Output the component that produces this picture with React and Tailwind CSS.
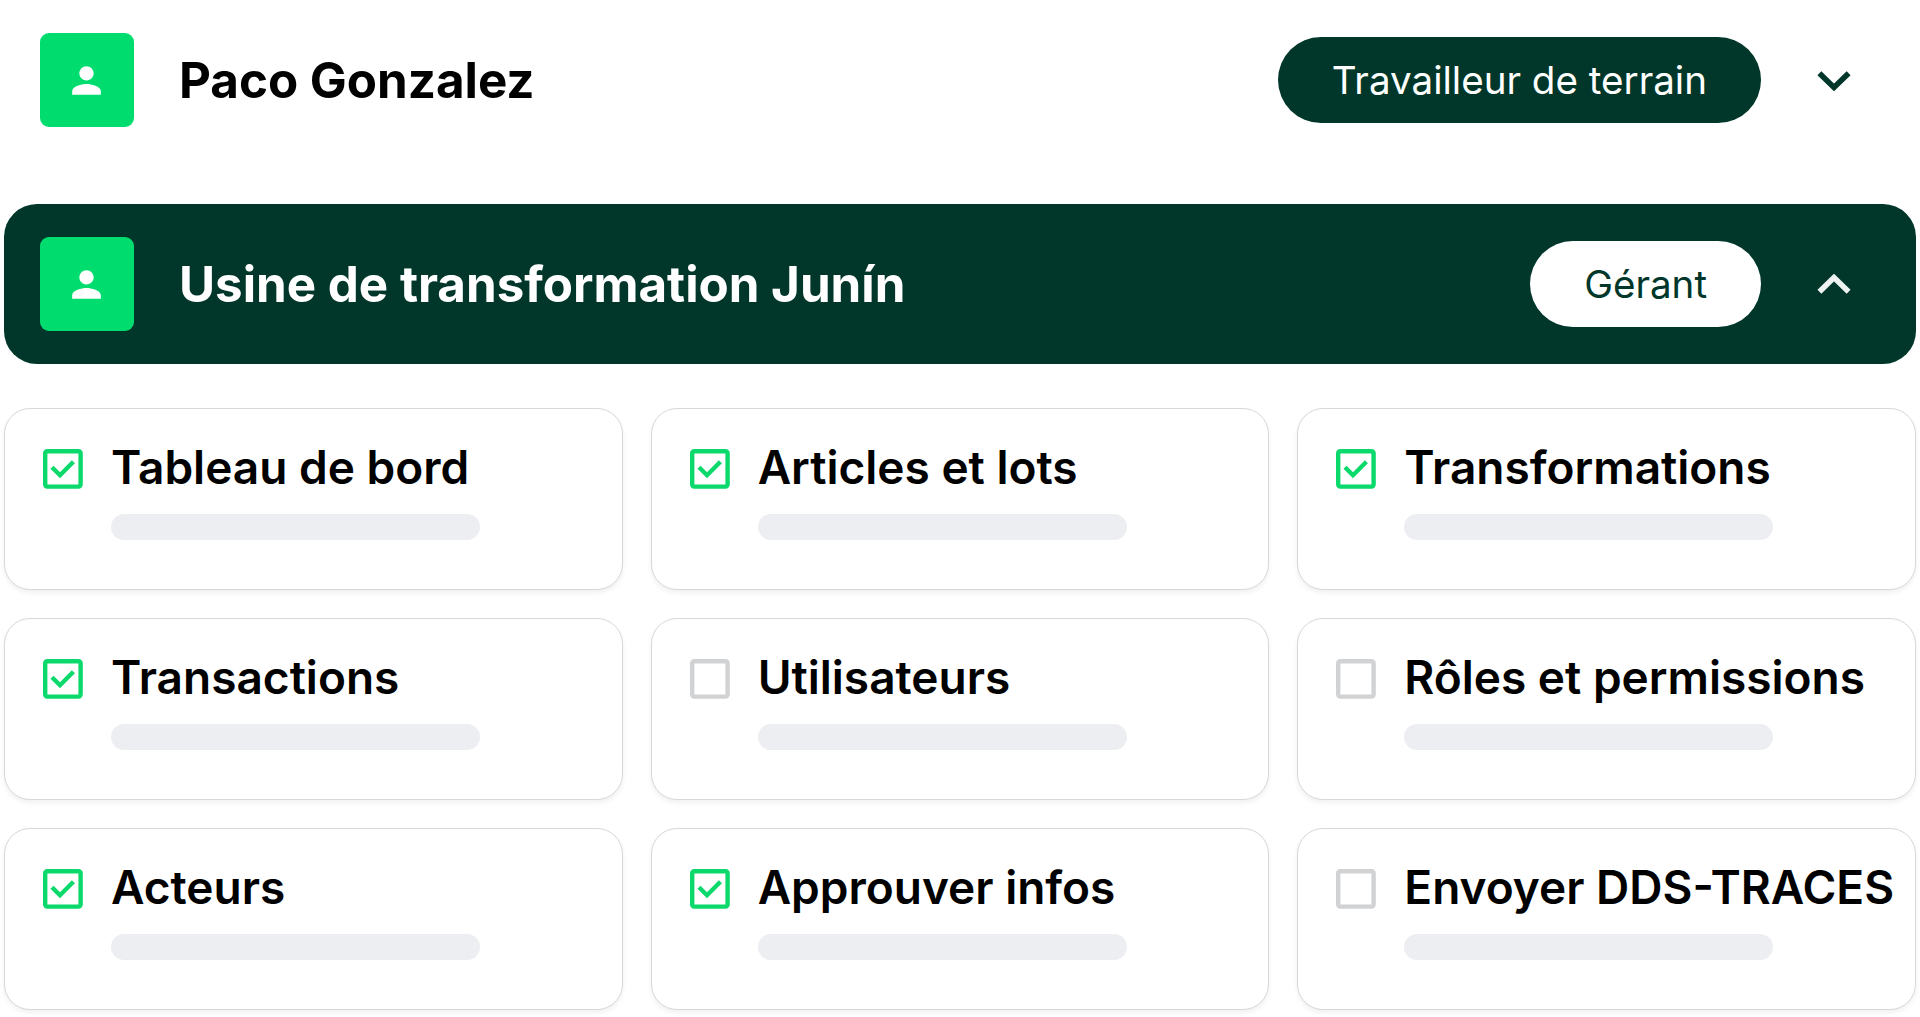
const permissions = [
    { label: "Tableau de bord", checked: true },
    { label: "Articles et lots", checked: true },
    { label: "Transformations", checked: true },
    { label: "Transactions", checked: true },
    { label: "Utilisateurs", checked: false },
    { label: "Rôles et permissions", checked: false },
    { label: "Acteurs", checked: true },
    { label: "Approuver infos", checked: true },
    { label: "Envoyer DDS-TRACES", checked: false }
];

function Avatar() {
    return (
        <div className="flex h-[94px] w-[94px] shrink-0 items-center justify-center rounded-[9px] bg-[#00dd6e]">
            <svg viewBox="0 0 24 24" className="mr-px h-[43px] w-[43px] fill-white">
                <path d="M12 12c2.21 0 4-1.79 4-4s-1.79-4-4-4-4 1.79-4 4 1.79 4 4 4zm0 2c-2.67 0-8 1.34-8 4v2h16v-2c0-2.66-5.33-4-8-4z" />
            </svg>
        </div>
    );
}

function Chevron({ up }) {
    return (
        <svg viewBox="0 0 34 20" className="h-5 w-[34px] shrink-0 fill-none stroke-current" strokeWidth="5.6">
            <path d={up ? "M2.4 17.8 L17 3.6 L31.6 17.8" : "M2.4 2.2 L17 16.4 L31.6 2.2"} />
        </svg>
    );
}

function Checkbox({ checked }) {
    return (
        <svg
            viewBox="0 0 40 40"
            className={checked ? "h-10 w-10 shrink-0 fill-none stroke-[#0bd96c]" : "h-10 w-10 shrink-0 fill-none stroke-[#d1d2d4]"}
            strokeWidth="4.4"
        >
            <rect x="2.2" y="2.2" width="35.4" height="35.4" rx="2" />
            {checked && <path d="M9 18.3 L17 26.2 L30.4 12.8" />}
        </svg>
    );
}

function PermissionCard({ label, checked }) {
    return (
        <div className="flex h-[182px] gap-7 rounded-[26px] border border-[#d6d8db] bg-white pt-10 pl-[38px] shadow-[0_3px_5px_rgba(0,0,0,0.06)]">
            <Checkbox checked={checked} />
            <div className="min-w-0">
                <h3 className="-mt-[2px] text-[46px] leading-10 font-semibold whitespace-nowrap">{label}</h3>
                <div className="mt-[27px] h-[26px] w-[369px] rounded-full bg-[#eceef2]" />
            </div>
        </div>
    );
}

export default function App() {
    return (
        <div className="h-[1017px] w-[1920px] overflow-hidden bg-white px-1 font-['Inter',sans-serif] text-black">
            <div className="flex h-40 items-center pr-[65px] pl-9">
                <Avatar />
                <h2 className="mt-0.5 ml-[45px] flex-1 text-[49.3px] font-bold">Paco Gonzalez</h2>
                <span className="mr-14 flex h-[86px] items-center rounded-full bg-[#00372a] px-[54px] pt-0.5 text-[38.6px] text-white">
                    Travailleur de terrain
                </span>
                <span className="mt-0.5 text-[#00372a]">
                    <Chevron />
                </span>
            </div>

            <div className="mt-11 flex h-40 items-center rounded-[33px] bg-[#00372a] pr-[65px] pl-9 text-white">
                <Avatar />
                <h2 className="mt-0.5 ml-[45px] flex-1 text-[49.3px] font-bold">Usine de transformation Junín</h2>
                <span className="mr-14 flex h-[86px] items-center rounded-full bg-white px-[54px] pt-0.5 text-[38.6px] text-[#00372a]">
                    Gérant
                </span>
                <span className="text-[#eef3f2]">
                    <Chevron up />
                </span>
            </div>

            <div className="mt-11 grid grid-cols-3 gap-7">
                {permissions.map((item) => (
                    <PermissionCard key={item.label} label={item.label} checked={item.checked} />
                ))}
            </div>
        </div>
    );
}
